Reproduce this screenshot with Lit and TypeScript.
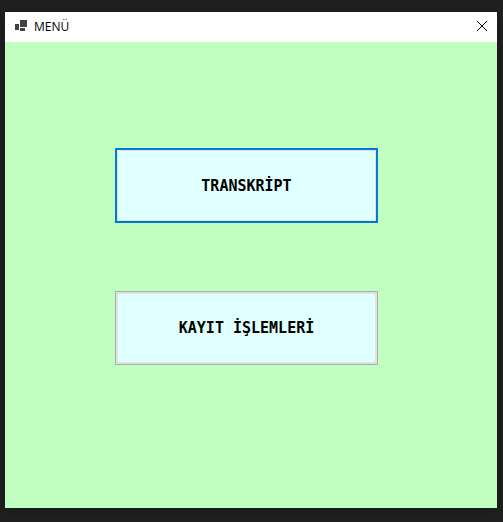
import { LitElement, html, css } from "lit";
import { customElement } from "lit/decorators.js";

@customElement("app-root")
export class AppRoot extends LitElement {
  static styles = css`
    :host {
      display: flex;
      box-sizing: border-box;
      min-height: 100vh;
      padding: 12px 6px 14px 5px;
      background: #202020;
    }
    .window {
      display: flex;
      flex-direction: column;
      flex: 1;
      background: #c0ffc0;
      box-shadow: 0 2px 10px #181818;
    }
    .titlebar {
      display: flex;
      align-items: center;
      gap: 6px;
      height: 30px;
      padding-left: 9px;
      background: #ffffff;
    }
    .logo {
      width: 14px;
      height: 14px;
    }
    .title {
      flex: 1;
      margin: 0;
      font: 400 12px/16px "Open Sans", "Noto Sans", sans-serif;
      color: #000000;
    }
    .close {
      display: grid;
      place-items: center;
      width: 30px;
      height: 30px;
      padding: 0;
      border: 0;
      background: none;
    }
    .menu {
      display: flex;
      flex-direction: column;
      gap: 68px;
      padding: 106px 119px 106px 110px;
    }
    .item {
      height: 74px;
      padding: 0;
      border: 1px solid #adadad;
      border-radius: 0;
      background: #e0ffff;
      box-shadow: inset 0 0 0 2px #e1e1e1;
      font: 700 15px/20px "DejaVu Sans Mono", monospace;
      color: #000000;
    }
    .item.default {
      height: 75px;
      border: 2px solid #0078d7;
      box-shadow: inset 0 0 0 1px #e1e1e1;
    }
  `;

  render() {
    return html`
      <div class="window">
        <header class="titlebar">
          <svg class="logo" viewBox="0 0 14 14" fill="#424242" shape-rendering="crispEdges" aria-hidden="true">
            <path d="M6 0h7v7H6zM1 4h4v6H1zM6 8h5v3H6z" />
          </svg>
          <h1 class="title">MENÜ</h1>
          <button class="close" aria-label="Kapat">
            <svg width="12" height="12" viewBox="0 0 12 12" fill="none" stroke="#000000" aria-hidden="true">
              <path d="M1 0l10 10M11 0L1 10" />
            </svg>
          </button>
        </header>
        <main class="menu">
          <button class="item default">TRANSKRİPT</button>
          <button class="item">KAYIT İŞLEMLERİ</button>
        </main>
      </div>
    `;
  }
}
